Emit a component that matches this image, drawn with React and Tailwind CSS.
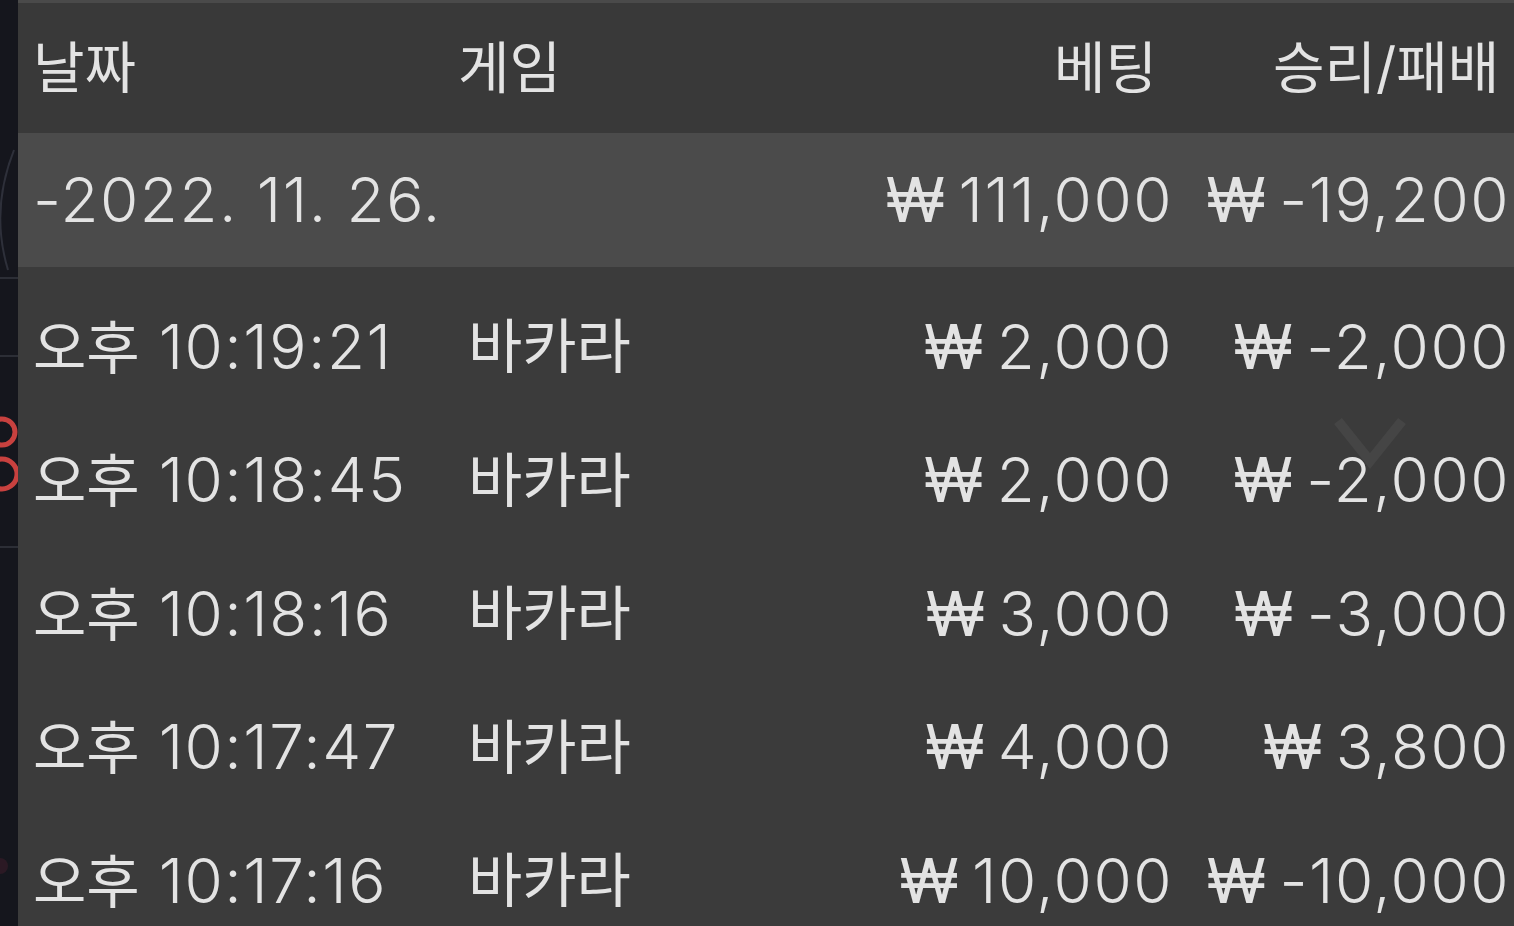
import React from "react";

const rows = [
  { time: "10:19:21", game: "바카라", bet: "2,000", result: "-2,000" },
  { time: "10:18:45", game: "바카라", bet: "2,000", result: "-2,000" },
  { time: "10:18:16", game: "바카라", bet: "3,000", result: "-3,000" },
  { time: "10:17:47", game: "바카라", bet: "4,000", result: "3,800" },
  { time: "10:17:16", game: "바카라", bet: "10,000", result: "-10,000" },
];

const font = { fontFamily: 'Inter, "Noto Sans CJK KR", sans-serif' };

const Won = ({ value }) => (
  <span>
    <span className="font-normal">₩</span>
    <span className="ml-[12px]">{value}</span>
  </span>
);

const SideStrip = () => (
  <div className="relative w-[18px] shrink-0 bg-[#15161d]">
    <svg width="18" height="926" className="absolute left-0 top-0">
      <path d="M14 150 Q-10 210 8 270" stroke="#2e303a" strokeWidth="2" fill="none" />
      <line x1="0" y1="278" x2="18" y2="278" stroke="#2c2e36" strokeWidth="2" />
      <line x1="0" y1="356" x2="18" y2="356" stroke="#2c2e36" strokeWidth="2" />
      <line x1="0" y1="547" x2="18" y2="547" stroke="#2c2e36" strokeWidth="2" />
      <circle cx="2" cy="432" r="13" stroke="#c8413f" strokeWidth="5" fill="none" />
      <circle cx="2" cy="474" r="15" stroke="#c8413f" strokeWidth="5" fill="none" />
      <circle cx="0" cy="866" r="8" fill="#3a1d2a" opacity="0.6" />
    </svg>
  </div>
);

export default function App() {
  return (
    <div
      className="w-[1514px] h-[926px] overflow-hidden flex bg-[#3b3b3b] text-[#e3e3e3] font-light"
      style={font}
    >
      <SideStrip />
      <div className="relative flex-1 flex flex-col">
        <div className="h-[3px] shrink-0 bg-[#4a4a4a]" />
        <div className="h-[130px] shrink-0 flex items-center bg-[#393939] text-[56px] leading-none whitespace-nowrap font-normal">
          <div className="w-[440px] pl-[15px]">날짜</div>
          <div className="flex-1">게임</div>
          <div className="pr-[19px]">베팅</div>
          <div className="w-[338px] pl-[97px]">승리/패배</div>
        </div>
        <div className="h-[134px] shrink-0 flex items-center bg-[#4b4b4b] text-[62px] tracking-[1.5px] leading-none whitespace-nowrap">
          <div className="flex-1 pl-[15px]">-2022. 11. 26.</div>
          <div className="mr-[3px]">
            <Won value="111,000" />
          </div>
          <div className="w-[338px] pr-[4px] text-right">
            <Won value="-19,200" />
          </div>
        </div>
        <div className="pt-[13px] shrink-0 flex flex-col">
          {rows.map((r, i) => (
            <div
              key={i}
              className="h-[133.5px] shrink-0 flex items-center text-[62px] tracking-[1.5px] leading-none whitespace-nowrap"
            >
              <div className="w-[450px] pl-[15px]">
                <span className="font-normal text-[58px] tracking-normal">오후</span> {r.time}
              </div>
              <div className="flex-1 font-normal text-[59px] tracking-normal">{r.game}</div>
              <div className="mr-[3px]">
                <Won value={r.bet} />
              </div>
              <div className="w-[338px] pr-[4px] text-right">
                <Won value={r.result} />
              </div>
            </div>
          ))}
        </div>
        <svg
          width="80"
          height="60"
          className="absolute left-[1312px] top-[415px] opacity-10"
        >
          <path d="M8 6 L40 46 L72 6" stroke="#9a9a9a" strokeWidth="10" fill="none" />
        </svg>
      </div>
    </div>
  );
}
